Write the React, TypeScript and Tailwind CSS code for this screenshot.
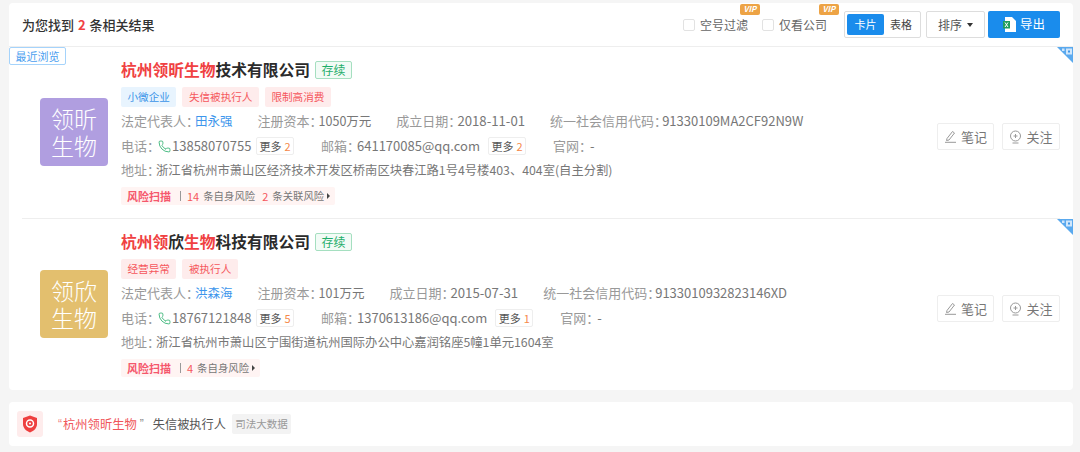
import { Phone } from 'lucide-react';
import type { ReactNode } from 'react';

const FONT = "font-['Noto_Sans_CJK_SC','Liberation_Sans',sans-serif]";

type Company = {
  name: { text: string; hit: boolean }[];
  logo: [string, string];
  logoColor: string;
  tags: { text: string; blue?: boolean }[];
  legal: string;
  capital: string;
  date: string;
  credit: string;
  phone: string;
  phoneMore: number;
  email: string;
  emailMore: number;
  address: string;
  risk: number;
  related?: number;
};

const companies: Company[] = [
  {
    name: [
      { text: '杭州领昕生物', hit: true },
      { text: '技术有限公司', hit: false },
    ],
    logo: ['领昕', '生物'],
    logoColor: 'bg-[#b09ee0]',
    tags: [{ text: '小微企业', blue: true }, { text: '失信被执行人' }, { text: '限制高消费' }],
    legal: '田永强',
    capital: '1050万元',
    date: '2018-11-01',
    credit: '91330109MA2CF92N9W',
    phone: '13858070755',
    phoneMore: 2,
    email: '641170085@qq.com',
    emailMore: 2,
    address: '浙江省杭州市萧山区经济技术开发区桥南区块春江路1号4号楼403、404室(自主分割)',
    risk: 14,
    related: 2,
  },
  {
    name: [
      { text: '杭州领', hit: true },
      { text: '欣', hit: false },
      { text: '生物', hit: true },
      { text: '科技有限公司', hit: false },
    ],
    logo: ['领欣', '生物'],
    logoColor: 'bg-[#e3bf6e]',
    tags: [{ text: '经营异常' }, { text: '被执行人' }],
    legal: '洪森海',
    capital: '101万元',
    date: '2015-07-31',
    credit: '9133010932823146XD',
    phone: '18767121848',
    phoneMore: 5,
    email: '1370613186@qq.com',
    emailMore: 1,
    address: '浙江省杭州市萧山区宁围街道杭州国际办公中心嘉润铭座5幢1单元1604室',
    risk: 4,
  },
];

function Vip() {
  return (
    <span className="absolute -top-[12px] -right-[12px] flex h-[11px] w-[20px] items-center justify-center rounded-[2px] bg-[#eda345] text-[8px] leading-none font-bold text-white italic">
      VIP
    </span>
  );
}

function Check({ label }: { label: string }) {
  return (
    <label className="relative flex items-center gap-[5px] text-[12px] text-[#666]">
      <span className="h-[12px] w-[12px] rounded-[2px] border border-[#e2e2e2] bg-white" />
      {label}
      <Vip />
    </label>
  );
}

function More({ n }: { n: number }) {
  return (
    <span className="flex h-[18px] w-[38px] items-center justify-center gap-[3px] rounded-[2px] border border-[#eee] text-[11px] text-[#555]">
      更多 <span className="text-[#f5894a]">{n}</span>
    </span>
  );
}

// 冒号用半宽字形，和参考图的间距一致
function Field({ label, className, children }: { label: string; className: string; children: ReactNode }) {
  return (
    <span className="flex items-center">
      <span className="[font-feature-settings:'halt']">{label}：</span>
      <span className={className}>{children}</span>
    </span>
  );
}

function Corner() {
  return (
    <svg className="absolute top-0 right-0" width="16" height="16" viewBox="0 0 16 16">
      <path d="M0 0H16V16Z" fill="#5aa9ee" />
      <path d="M5 1.500H7.500V4H5ZM9 1.500H15V7.500H9Z" fill="#cfe6fb" />
      <path d="M11 3.500H13V5.500H11Z" fill="#3f97e8" />
    </svg>
  );
}

function Card({ c, last }: { c: Company; last?: boolean }) {
  return (
    <div className="relative flex">
      <Corner />
      <div className={`mx-[13px] flex flex-1 items-center ${last ? '' : 'border-b border-[#eee]'}`}>
        <div
          className={`-mt-[2px] ml-[18px] flex h-[68px] w-[68px] shrink-0 flex-col items-center justify-center rounded-[4px] text-[23px] leading-[27px] font-light text-white ${c.logoColor}`}
        >
          <span>{c.logo[0]}</span>
          <span>{c.logo[1]}</span>
        </div>
        <div className="ml-[13px] flex h-[171px] min-w-0 flex-1 flex-col pt-[12px] text-[13px] text-[#999]">
          <div className="flex h-[22px] items-center">
            <span className="text-[15.75px] leading-[22px] font-bold text-[#2b2b2b]">
              {c.name.map((p) => (
                <span key={p.text} className={p.hit ? 'text-[#f04142]' : ''}>
                  {p.text}
                </span>
              ))}
            </span>
            <span className="ml-[5px] flex h-[18px] w-[37px] items-center justify-center rounded-[2px] border border-[#a5dfc0] bg-[#f2fbf6] text-[12px] text-[#1fae6a]">
              存续
            </span>
          </div>
          <div className="mt-[6px] flex h-[20px] gap-[6px]">
            {c.tags.map((t) => (
              <span
                key={t.text}
                className={`flex items-center rounded-[2px] px-[6.5px] text-[10.6px] ${
                  t.blue ? 'bg-[#e8f4fe] text-[#3b95e8]' : 'bg-[#feecec] text-[#f5575c]'
                }`}
              >
                {t.text}
              </span>
            ))}
          </div>
          <div className="mt-[4px] flex h-[20px] items-center gap-[25px] whitespace-nowrap">
            <Field label="法定代表人" className="ml-[2.5px] text-[12.5px] text-[#3d96ec]">
              {c.legal}
            </Field>
            <Field label="注册资本" className="ml-[2.5px] text-[12.5px] text-[#777]">
              {c.capital}
            </Field>
            <Field label="成立日期" className="ml-[2.5px] text-[13.2px] text-[#777]">
              {c.date}
            </Field>
            <Field label="统一社会信用代码" className="ml-[1.5px] text-[#777]">
              {c.credit}
            </Field>
          </div>
          <div className="mt-[5px] flex h-[20px] items-center whitespace-nowrap">
            <span className="w-[37px]">电话：</span>
            <Phone size={13} strokeWidth={1.6} className="text-[#2fb170]" />
            <span className="ml-[1px] w-[84px] text-[#777]">{c.phone}</span>
            <More n={c.phoneMore} />
            <span className="ml-[27px] w-[36px]">邮箱：</span>
            <span className="mr-[8px] text-[#777]">{c.email}</span>
            <More n={c.emailMore} />
            <span className="ml-[27px] w-[37px]">官网：</span>
            <span className="text-[#777]">-</span>
          </div>
          <div className="mt-[4px] flex h-[20px] items-center whitespace-nowrap">
            <Field label="地址" className="ml-[2.5px] text-[12.3px] text-[#777]">
              {c.address}
            </Field>
          </div>
          <div className="mt-[7px] flex h-[18px] items-center self-start rounded-[2px] bg-[#fff4f3] pr-[5px] pl-[6px] text-[10.4px] text-[#777]">
            <span className="w-[53px] text-[11px] font-bold text-[#f5576c]">风险扫描</span>
            <span className="mr-[6px] h-[10px] w-px bg-[#999]" />
            <span className="mr-[4px] text-[11px] text-[#f5575c]">{c.risk}</span>
            条自身风险
            {c.related ? (
              <>
                <span className="mr-[4px] ml-[7px] text-[11px] text-[#f5575c]">{c.related}</span>
                条关联风险
              </>
            ) : null}
            <span className="ml-[3px] h-0 w-0 border-y-[3px] border-l-[3px] border-y-transparent border-l-[#444]" />
          </div>
        </div>
        <div className="mt-2 flex shrink-0 gap-[8px] self-center">
          <button className="flex h-[27px] w-[57px] items-center justify-center gap-[4px] rounded-[2px] border border-[#eee] text-[13px] text-[#777]">
            <svg width="13" height="13" viewBox="0 0 13 13" fill="none" stroke="#999" strokeWidth="1">
              <path d="M3 8.500 8.500 1.500 10.500 3 5 10 2.500 10.500ZM1 12.300H12" />
            </svg>
            笔记
          </button>
          <button className="flex h-[27px] w-[58px] items-center justify-center gap-[4px] rounded-[2px] border border-[#eee] text-[13px] text-[#777]">
            <svg width="13" height="14" viewBox="0 0 13 14" fill="none" stroke="#999" strokeWidth="1">
              <circle cx="6.500" cy="6" r="5" />
              <path d="M6.500 4V8M4.500 6H8.500M3.500 13H9.500" />
            </svg>
            关注
          </button>
        </div>
      </div>
    </div>
  );
}

export default function App() {
  return (
    <div className={`${FONT} h-[452px] w-[1080px] overflow-hidden bg-[#f5f5f5] pt-[3px] pr-[7px] pl-[9px]`}>
      <div className="relative rounded-[4px] bg-white">
        <div className="flex h-[44px] items-center border-b border-[#eee] pr-[13px] pl-[13px]">
          <div className="text-[13px] font-medium text-[#333]">
            为您找到 <span className="mx-[1px] font-bold text-[#f04142]">2</span> 条相关结果
          </div>
          <div className="ml-auto flex items-center">
            <Check label="空号过滤" />
            <div className="ml-[14px]">
              <Check label="仅看公司" />
            </div>
            <div className="ml-[17px] flex h-[27px] w-[77px] items-center rounded-[2px] border border-[#ddd] p-[2px] text-[11px]">
              <span className="flex h-full w-[37px] items-center justify-center rounded-[2px] bg-[#1a8cec] text-white">
                卡片
              </span>
              <span className="flex-1 text-center text-[#444]">表格</span>
            </div>
            <div className="ml-[5px] flex h-[27px] w-[59px] items-center justify-center gap-[5px] rounded-[2px] border border-[#ddd] text-[12px] text-[#555]">
              排序
              <span className="h-0 w-0 border-x-[3.5px] border-t-[4px] border-x-transparent border-t-[#333]" />
            </div>
            <button className="ml-[3px] flex h-[27px] w-[72px] items-center justify-center gap-[4px] rounded-[2px] bg-[#1a8cec] text-[12.5px] text-white">
              <svg width="13" height="15" viewBox="0 0 13 15">
                <path d="M2 0H9L13 4V15H2Z" fill="#fff" />
                <path d="M0 4H7V11.500H0Z" fill="#1f9e5c" />
                <path d="M2 5.500 5 10M5 5.500 2 10" stroke="#fff" strokeWidth="1" />
              </svg>
              导出
            </button>
          </div>
        </div>
        <span className="absolute top-[44px] left-0 z-10 flex h-[18px] w-[57px] items-center justify-center rounded-[2px] border border-[#a5d3fb] bg-white text-[11px] text-[#4a9eef]">
          最近浏览
        </span>
        {companies.map((c, i) => (
          <Card key={c.legal} c={c} last={i === companies.length - 1} />
        ))}
      </div>
      <div className="mt-[12px] flex h-[44px] items-center rounded-[4px] bg-white pl-[8px]">
        <span className="flex h-[26px] w-[26px] items-center justify-center rounded-[3px] bg-[#feecec]">
          <svg width="16" height="18" viewBox="0 0 16 18">
            <path d="M8 0.500 15 3V9C15 13 12 16 8 17.500 4 16 1 13 1 9V3Z" fill="#ee3f3f" />
            <circle cx="8" cy="8.500" r="3.500" fill="none" stroke="#fff" strokeWidth="1.500" />
            <circle cx="8" cy="8.500" r="1" fill="#fff" />
          </svg>
        </span>
        <span className="ml-[15px] w-[5px] font-['Liberation_Sans'] text-[12px] text-[#f0817f]">“</span>
        <span className="text-[12.3px] text-[#f0565a]">杭州领昕生物</span>
        <span className="ml-[3px] w-[7px] font-['Liberation_Sans'] text-[12px] text-[#888]">”</span>
        <span className="ml-[6px] text-[12.2px] text-[#555]">失信被执行人</span>
        <span className="ml-[6px] flex h-[20px] w-[59px] items-center justify-center rounded-[2px] bg-[#f3f3f3] text-[10.5px] text-[#999]">
          司法大数据
        </span>
      </div>
    </div>
  );
}
